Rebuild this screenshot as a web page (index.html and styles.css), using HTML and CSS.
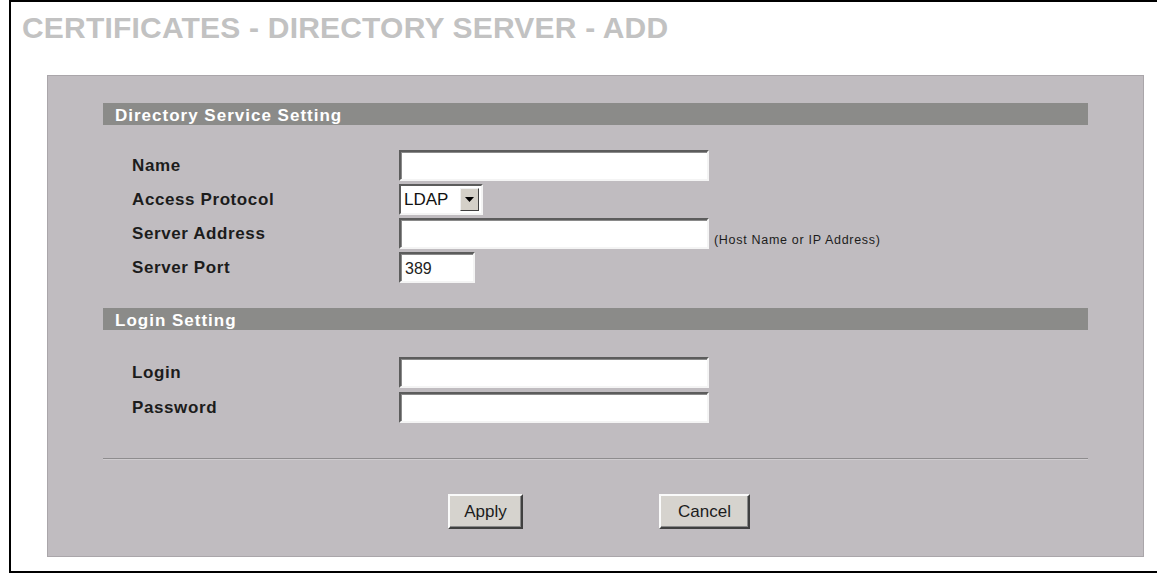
FILE: index.html
```html
<!DOCTYPE html>
<html>
<head>
<meta charset="utf-8">
<link rel="stylesheet" href="styles.css">
</head>
<body>
<div class="frame">
  <h1 class="title">CERTIFICATES - DIRECTORY SERVER - ADD</h1>
  <div class="panel">
    <div class="section-bar">Directory Service Setting</div>
    <div class="rows rows-first">
      <div class="label">Name</div>
      <div class="field"><input class="text wide" type="text"></div>
      <div class="label">Access Protocol</div>
      <div class="field">
        <div class="select">
          <span class="select-value">LDAP</span>
          <span class="select-btn"><svg width="9" height="5" viewBox="0 0 9 5"><path d="M0 0H9L4.5 5Z" fill="#000"/></svg></span>
        </div>
      </div>
      <div class="label">Server Address</div>
      <div class="field"><input class="text wide" type="text"><span class="hint">(Host Name or IP Address)</span></div>
      <div class="label">Server Port</div>
      <div class="field"><input class="text port" type="text" value="389"></div>
    </div>
    <div class="section-bar section-gap">Login Setting</div>
    <div class="rows rows-login">
      <div class="label">Login</div>
      <div class="field"><input class="text wide" type="text"></div>
      <div class="label">Password</div>
      <div class="field"><input class="text wide" type="password"></div>
    </div>
    <div class="separator"></div>
    <div class="buttons">
      <button class="btn btn-apply">Apply</button>
      <button class="btn btn-cancel">Cancel</button>
    </div>
  </div>
</div>
</body>
</html>
```

FILE: styles.css
```css
html, body {
  margin: 0;
  padding: 0;
  background: #ffffff;
  font-family: "Liberation Sans", Arial, sans-serif;
}

.frame {
  margin-left: 9px;
  height: 569px;
  border-top: 2px solid #000;
  border-left: 2px solid #000;
  border-bottom: 2px solid #000;
  padding-left: 11px;
  overflow: hidden;
}

.title {
  margin: 9px 0 0 0;
  font-size: 30px;
  line-height: 34px;
  font-weight: bold;
  color: #c2c2c2;
  letter-spacing: 0.2px;
  white-space: nowrap;
}

.panel {
  margin: 30px 0 0 25px;
  height: 453px;
  background: #c0bcc0;
  border: 1px solid #aaa6aa;
  padding: 27px 55px 0 55px;
  box-sizing: content-box;
  width: 985px;
}

.section-bar {
  height: 22px;
  background: #8b8b89;
  color: #ffffff;
  font-size: 17px;
  font-weight: bold;
  letter-spacing: 1px;
  line-height: 26px;
  padding-left: 12px;
  overflow: hidden;
  white-space: nowrap;
}

.section-gap {
  margin-top: 25px;
}

.rows {
  display: grid;
  grid-template-columns: 267px 1fr;
  padding-left: 29px;
}

.rows-first {
  margin-top: 25px;
  row-gap: 3px;
}

.rows-login {
  margin-top: 27px;
  row-gap: 4px;
}

.label {
  font-size: 17px;
  font-weight: bold;
  letter-spacing: 0.6px;
  color: #1c1c1c;
  display: flex;
  align-items: center;
  height: 31px;
}

.field {
  display: flex;
  align-items: center;
  height: 31px;
}

.text {
  box-sizing: border-box;
  height: 31px;
  margin: 0;
  padding: 2px 4px 0 4px;
  border: 2px solid;
  border-color: #5c5c5c #f4f4f4 #f4f4f4 #5c5c5c;
  box-shadow: inset 1px 1px 0 #8a8a8a;
  background: #ffffff;
  font-family: "Liberation Sans", Arial, sans-serif;
  font-size: 16px;
  color: #222;
  outline: none;
}

.wide {
  width: 310px;
}

.port {
  width: 76px;
}

.hint {
  align-self: flex-end;
  margin-left: 5px;
  padding-bottom: 2px;
  font-size: 12.5px;
  letter-spacing: 0.7px;
  color: #1c1c1c;
  white-space: nowrap;
}

.select {
  box-sizing: border-box;
  width: 84px;
  height: 31px;
  display: flex;
  align-items: center;
  border: 2px solid;
  border-color: #5c5c5c #f4f4f4 #f4f4f4 #5c5c5c;
  background: #ffffff;
  padding: 0 2px 0 3px;
}

.select-value {
  flex: 1;
  font-size: 17px;
  color: #111;
  padding-top: 1px;
}

.select-btn {
  box-sizing: border-box;
  width: 19px;
  height: 23px;
  background: #d4d0c8;
  border: 1px solid;
  border-color: #f0f0f0 #404040 #404040 #f0f0f0;
  display: flex;
  align-items: center;
  justify-content: center;
}

.separator {
  margin-top: 35px;
  height: 1px;
  background: #8e8c8e;
  border-bottom: 1px solid #cfcccf;
}

.buttons {
  display: flex;
  gap: 136px;
  padding-left: 345px;
  margin-top: 34px;
}

.btn {
  box-sizing: border-box;
  height: 35px;
  margin: 0;
  padding: 0;
  background: #d6d3ce;
  border: 2px solid;
  border-color: #fafafa #404040 #404040 #fafafa;
  box-shadow: inset -1px -1px 0 #8a8a8a;
  font-family: "Liberation Sans", Arial, sans-serif;
  font-size: 17px;
  color: #1c1c1c;
}

.btn-apply {
  width: 75px;
}

.btn-cancel {
  width: 91px;
}
```
